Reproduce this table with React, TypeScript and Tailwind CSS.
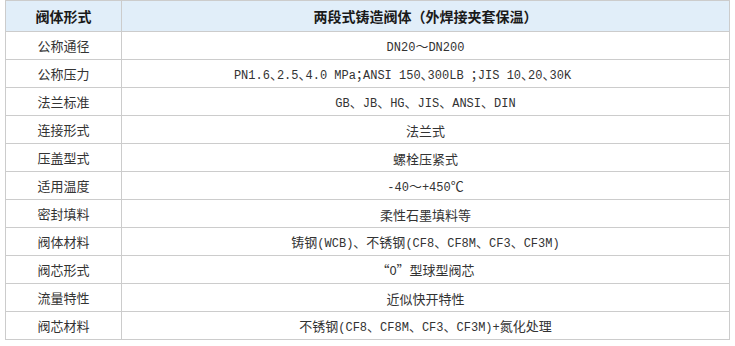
import React from "react";

const rows: [string, string][] = [
  ["公称通径", "DN20～DN200"],
  ["公称压力", "PN1.6、2.5、4.0 MPa；ANSI 150、300LB ；JIS 10、20、30K"],
  ["法兰标准", "GB、JB、HG、JIS、ANSI、DIN"],
  ["连接形式", "法兰式"],
  ["压盖型式", "螺栓压紧式"],
  ["适用温度", "-40～+450℃"],
  ["密封填料", "柔性石墨填料等"],
  ["阀体材料", "铸钢(WCB)、不锈钢(CF8、CF8M、CF3、CF3M)"],
  ["阀芯形式", "“O”型球型阀芯"],
  ["流量特性", "近似快开特性"],
  ["阀芯材料", "不锈钢(CF8、CF8M、CF3、CF3M)+氮化处理"],
];

function Mixed({ text, compact }: { text: string; compact?: boolean }) {
  const parts = text.match(/[\x20-\x7E]+|[^\x20-\x7E]+/g) || [];
  return (
    <>
      {parts.map((p, i) =>
        /^[\x20-\x7E]+$/.test(p) ? (
          <span
            key={i}
            className="text-[12px] whitespace-pre"
            style={{ fontFamily: '"Liberation Mono", monospace' }}
          >
            {p}
          </span>
        ) : (
          <span
            key={i}
            className={compact ? "text-[13px] tracking-[-6px]" : "text-[13px]"}
            style={{ fontFamily: '"Noto Sans CJK SC", sans-serif' }}
          >
            {p}
          </span>
        )
      )}
    </>
  );
}

export default function App() {
  return (
    <div className="w-[735px] h-[346px] bg-white pl-[5px]">
      <table className="border-collapse w-[725px] table-fixed text-[#333]">
        <colgroup>
          <col className="w-[116px]" />
          <col />
        </colgroup>
        <thead>
          <tr className="h-[31px] bg-[#e1eef9]">
            <th
              className="border border-[#cccccc] text-[14px] font-bold text-[#1a1a1a] text-center p-0"
              style={{ fontFamily: '"Noto Sans CJK SC", sans-serif' }}
            >
              阀体形式
            </th>
            <th
              className="border border-[#cccccc] text-[14px] font-bold text-[#1a1a1a] text-center p-0"
              style={{ fontFamily: '"Noto Sans CJK SC", sans-serif' }}
            >
              两段式铸造阀体（外焊接夹套保温）
            </th>
          </tr>
        </thead>
        <tbody>
          {rows.map(([k, v], i) => (
            <tr key={i} className="h-[28px]">
              <td
                className="border border-[#cccccc] text-center text-[13px] p-0 leading-none"
                style={{ fontFamily: '"Noto Sans CJK SC", sans-serif' }}
              >
                {k}
              </td>
              <td className="border border-[#cccccc] text-center p-0 leading-none">
                <span className={i === 1 ? "pr-[46px]" : ""}>
                  <Mixed text={v} compact={i === 1} />
                </span>
              </td>
            </tr>
          ))}
        </tbody>
      </table>
    </div>
  );
}
